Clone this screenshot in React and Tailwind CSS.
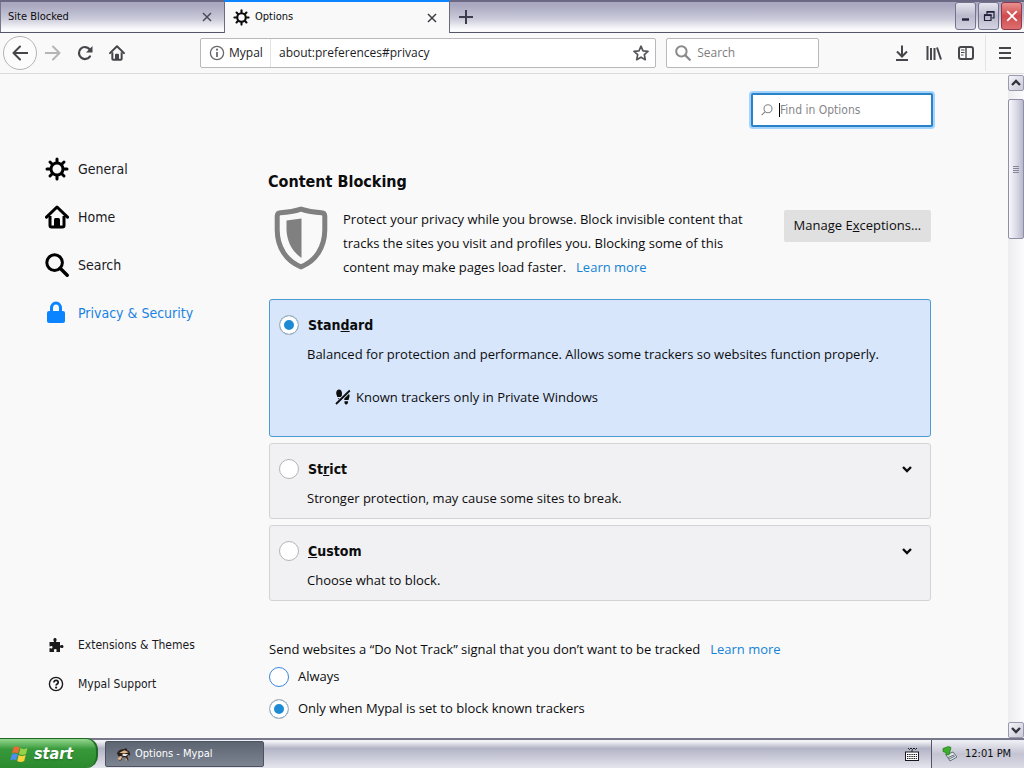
import { useState } from 'react';

const Gear = ({ className }) => (
  <svg viewBox="0 0 24 24" className={className} fill="none" stroke="currentColor">
    <circle cx="12" cy="12" r="6" strokeWidth="3" />
    <path
      d="M12 2v3M12 19v3M2 12h3M19 12h3M5 5l2 2M17 17l2 2M5 19l2-2M17 7l2-2"
      strokeWidth="3"
      strokeLinecap="round"
    />
  </svg>
);

const House = ({ className }) => (
  <svg viewBox="0 0 24 24" className={className} fill="none" stroke="currentColor">
    <path d="M1.500 12.200L12 2l10.500 10.200" strokeWidth="3" strokeLinecap="round" strokeLinejoin="round" />
    <path d="M5 11v9.500q0 1.500 1.500 1.500h11q1.500 0 1.500-1.500V11" strokeWidth="3" />
    <path d="M9 22v-7.500q0-1.500 1.500-1.500h3q1.500 0 1.500 1.500V22z" fill="currentColor" stroke="none" />
  </svg>
);

const Lens = ({ className }) => (
  <svg viewBox="0 0 24 24" className={className} fill="none" stroke="currentColor" strokeWidth="3">
    <circle cx="9.600" cy="9.600" r="7.800" />
    <path d="M15.200 15.200l7 7" strokeWidth="3.400" strokeLinecap="round" />
  </svg>
);

const Lock = ({ className }) => (
  <svg viewBox="0 0 24 24" className={className} fill="none">
    <rect x="2" y="10" width="18" height="12" rx="2" fill="currentColor" />
    <path d="M6.500 12V7a4.500 5 0 0 1 9 0V12" stroke="currentColor" strokeWidth="3" />
  </svg>
);

const Puzzle = ({ className }) => (
  <svg viewBox="0 0 16 16" className={className} fill="currentColor">
    <path d="M1.500 5h4c.5 0 .6-.5.2-1C5 3 5.300 1 7 1s2 2 1.300 3c-.4.500-.3 1 .2 1H12v3c0 .6.500.7 1 .3 1-.8 2.500-.3 2.500 1.200S14 11.500 13 10.800c-.5-.4-1-.3-1 .3V15H8.800c-.6 0-.7-.4-.4-.9.7-1 .3-2.100-1.100-2.100s-1.900 1.100-1.200 2.100c.3.500.2.900-.4.900H1.500v-3.500c0-.6.500-.7 1-.3.900.6 2 .2 2-1s-1.100-1.700-2-1c-.5.400-1 .3-1-.3z" />
  </svg>
);

const Help = ({ className }) => (
  <svg viewBox="0 0 16 16" className={className} fill="none" stroke="currentColor">
    <circle cx="8" cy="8" r="6.600" strokeWidth="1.400" />
    <path d="M5.900 6.400c0-2.900 4.300-2.700 4.300 0 0 1.600-2.100 1.500-2.100 3.100" strokeWidth="1.700" />
    <circle cx="8.100" cy="11.600" r="1.100" fill="currentColor" stroke="none" />
  </svg>
);

const Shield = () => (
  <svg viewBox="0 0 56 64" className="h-16 w-14 shrink-0 text-[#808080]">
    <path
      d="M28 3.200c7 2.400 14 3.300 20.500 3.500q3.200.2 3.300 3.400v14C51.600 41 43 55 28 60.800 13 55 4.400 41 4.200 24.100v-14q.1-3.200 3.300-3.400C14 6.500 21 5.600 28 3.200z"
      fill="none"
      stroke="currentColor"
      strokeWidth="5"
    />
    <path d="M28.500 12.500v39.500C18.500 45 14 35 13.500 24V14.500z" fill="currentColor" />
  </svg>
);

const TrackerOff = () => (
  <svg viewBox="0 0 16 16" className="h-4 w-4 shrink-0" fill="currentColor">
    <path d="M4 .6c2 0 3.200 2 3 4.500L6.600 8H2.400C1.500 6 1 4.500 1.300 3 1.600 1.500 2.600.6 4 .6zM2.800 9.200h3.400L3.500 12z" />
    <path d="M12.300 4c1.700.2 2.500 1.800 2.200 3.600L13.500 11H9.300l-.2-3C9 5.500 10.500 3.800 12.300 4zM9.500 12.200h3.600c0 2-.6 3.300-2 3.200-1.300 0-1.800-1.200-1.600-3.200z" />
    <path d="M1 15L15 1.500" stroke="#d7e6fb" strokeWidth="3.600" />
    <path d="M1 15L14.800 1.500" stroke="currentColor" strokeWidth="1.800" />
  </svg>
);

const Chevron = ({ className, up }) => (
  <svg viewBox="0 0 10 8" className={className} fill="none" stroke="currentColor" strokeWidth="2.400">
    <path d={up ? 'M1 6l4-4 4 4' : 'M1 2l4 4 4-4'} />
  </svg>
);

const Cross = ({ className }) => (
  <svg viewBox="0 0 12 12" className={className} fill="none" stroke="currentColor" strokeWidth="1.800">
    <path d="M1.200 1.200l9.600 9.600M10.800 1.200L1.200 10.800" />
  </svg>
);

const windowButton =
  'flex h-7 w-[21px] items-center justify-center rounded-[3px] border border-[#73738f] bg-linear-to-b from-[#e6e6f0] via-[#b9b9cc] to-[#d4d4e2]';

const TabStrip = () => (
  <div className="flex h-[33px] border-b border-b-[#55556a] border-t-2 border-t-[#6b6884] bg-linear-to-b from-[#a9a8c0] from-10% via-[#c9c9d9] via-55% to-[#fafafc] to-90%">
    <div className="flex w-56 items-center justify-between border-l border-[#77758c] pr-3 pl-[7px] text-[11px]">
      <span>Site Blocked</span>
      <button aria-label="Close Site Blocked">
        <Cross className="h-[10px] w-[10px] text-[#4a4a55]" />
      </button>
    </div>
    <div className="-mt-0.5 -mb-px flex w-[226px] items-center border-x border-t-2 border-x-[#6b6a7c] border-t-[#0a84ff] bg-[#f9f9fa] pr-3 pl-2 text-[11px]">
      <Gear className="h-[17px] w-[17px]" />
      <span className="ml-[5px] flex-1">Options</span>
      <button aria-label="Close Options">
        <Cross className="h-[10px] w-[10px] text-[#3c3c44]" />
      </button>
    </div>
    <button aria-label="New tab" className="px-[9px]">
      <svg viewBox="0 0 14 14" className="h-[14px] w-[14px]" stroke="#3c3c4a" strokeWidth="2">
        <path d="M7 0v14M0 7h14" />
      </svg>
    </button>
    <div className="ml-auto flex gap-0.5 pr-0.5">
      <button aria-label="Minimize" className={windowButton}>
        <svg viewBox="0 0 12 12" className="h-3 w-3">
          <path d="M2 9.500h7" stroke="#1f1f3a" strokeWidth="2.400" />
        </svg>
      </button>
      <button aria-label="Restore" className={windowButton}>
        <svg viewBox="0 0 12 12" className="h-3 w-3" fill="none" stroke="#1f1f3a" strokeWidth="1.200">
          <path d="M4 4V1.500h7V8H8.500" />
          <path d="M1.500 5h6.500v5.500H1.500z" />
          <path d="M1 5.200h7.500M4 1.800h7" strokeWidth="1.800" />
        </svg>
      </button>
      <button
        aria-label="Close"
        className="flex h-7 w-[21px] items-center justify-center rounded-[3px] border border-[#8f3a4c] bg-linear-to-b from-[#e89090] via-[#cf4a4e] to-[#dd6f6f]"
      >
        <Cross className="h-3 w-3 text-white" />
      </button>
    </div>
  </div>
);

const Toolbar = () => (
  <div className="flex h-[41px] items-center border-b border-[#dcdcde] bg-[#f9f9fa] text-[#46464a]">
    <button
      aria-label="Back"
      className="ml-[3px] flex h-[34px] w-[34px] items-center justify-center rounded-full border border-[#b4b4b6] bg-[#fcfcfd]"
    >
      <svg viewBox="0 0 16 16" className="h-4 w-4" fill="none" stroke="currentColor" strokeWidth="2">
        <path d="M15.500 8H1.500M8 1.500L1.500 8 8 14.500" strokeLinejoin="round" strokeLinecap="round" />
      </svg>
    </button>
    <button aria-label="Forward" className="ml-2 text-[#b5b5b7]">
      <svg viewBox="0 0 16 16" className="h-4 w-4" fill="none" stroke="currentColor" strokeWidth="2">
        <path d="M.500 8h14M8 1.500L14.500 8 8 14.500" strokeLinejoin="round" strokeLinecap="round" />
      </svg>
    </button>
    <button aria-label="Reload" className="ml-4">
      <svg viewBox="0 0 16 16" className="h-4 w-4" fill="none" stroke="currentColor" strokeWidth="2.200">
        <path d="M13 11.300A6 6 0 1 1 12.600 4.200" strokeLinecap="round" />
        <path d="M15.500 1v6.500H9z" fill="currentColor" stroke="none" />
      </svg>
    </button>
    <button aria-label="Home page" className="ml-4">
      <House className="h-4 w-4" />
    </button>
    <label className="ml-[75px] flex h-[30px] min-w-0 flex-[13] items-center rounded-xs border border-[#b9b9bb] bg-white px-2 font-['Open_Sans',sans-serif] text-[12px] text-[#1c1c1f]">
      <svg viewBox="0 0 16 16" className="h-4 w-4 shrink-0 text-[#6a6a6e]" fill="none" stroke="currentColor">
        <circle cx="8" cy="8" r="6.600" strokeWidth="1.300" />
        <path d="M8 7v5" strokeWidth="1.800" />
        <circle cx="8" cy="4.700" r="1.100" fill="currentColor" stroke="none" />
      </svg>
      <span className="ml-1 w-[42px] border-r border-[#e2e2e4] leading-7">Mypal</span>
      <input
        aria-label="Address"
        defaultValue="about:preferences#privacy"
        className="ml-2 min-w-0 flex-1 outline-none"
      />
      <svg
        viewBox="0 0 16 16"
        className="-mr-0.5 h-4 w-4 shrink-0 text-[#56565a]"
        fill="none"
        stroke="currentColor"
        strokeWidth="1.700"
        strokeLinejoin="round"
      >
        <path d="M8 1.200l2 4.600 5 .5-3.700 3.400 1 5L8 12.200 3.700 14.700l1-5L1 6.300l5-.5z" />
      </svg>
    </label>
    <label className="ml-[10px] flex h-[30px] min-w-0 flex-[4] items-center rounded-xs border border-[#b9b9bb] bg-white px-2 font-['Open_Sans',sans-serif] text-[12px]">
      <Lens className="h-4 w-4 shrink-0 text-[#8a8a8c]" />
      <input
        aria-label="Search the web"
        placeholder="Search"
        className="ml-1.5 min-w-0 flex-1 outline-none placeholder:text-[#7d7d80]"
      />
    </label>
    <div className="ml-[75px] flex items-center gap-4">
      <button aria-label="Downloads">
        <svg viewBox="0 0 16 16" className="h-4 w-4" fill="none" stroke="currentColor" strokeWidth="2">
          <path d="M8 .500v10.500M3 6.500l5 5 5-5M2 15h12" />
        </svg>
      </button>
      <button aria-label="Library">
        <svg viewBox="0 0 16 16" className="h-4 w-4" fill="none" stroke="currentColor" strokeWidth="2">
          <path d="M1.500 1v14M5 3v12M8.500 3v12M11 2.500l4 12" />
        </svg>
      </button>
      <button aria-label="Sidebar">
        <svg viewBox="0 0 16 16" className="h-4 w-4" fill="none" stroke="currentColor">
          <rect x="1" y="2" width="14" height="12" rx="2" strokeWidth="2" />
          <path d="M8 2v12" strokeWidth="1.400" />
          <path d="M3 5h3.500M3 7.500h3.500M3 10h2.500" />
        </svg>
      </button>
    </div>
    <button aria-label="Open menu" className="ml-[11px] flex h-9 items-center border-l border-[#e4e4e6] pr-3 pl-3">
      <svg viewBox="0 0 14 14" className="h-[14px] w-[14px]" stroke="currentColor" strokeWidth="2">
        <path d="M1 2h12M1 7h12M1 12h12" />
      </svg>
    </button>
  </div>
);

const categories = [
  { name: 'General', icon: Gear },
  { name: 'Home', icon: House },
  { name: 'Search', icon: Lens },
  { name: 'Privacy & Security', icon: Lock, active: true },
];

const Sidebar = () => (
  <nav className="flex w-[268px] shrink-0 flex-col pt-[71px] pb-[35px] pl-[45px] text-[#1a1a1d]">
    {categories.map(({ name, icon: Icon, active }) => (
      <a
        key={name}
        href="#privacy"
        className={`flex h-12 items-center gap-[9px] text-[14px] ${active ? 'text-[#1a82e2]' : ''}`}
      >
        <Icon className={`h-6 w-6 ${active ? 'text-[#0a84ff]' : 'text-black'}`} />
        {name}
      </a>
    ))}
    <div className="mt-auto text-[12px]">
      <a href="#addons" className="flex h-[39px] items-center gap-[14px] pl-[3px]">
        <Puzzle className="h-4 w-4" />
        Extensions &amp; Themes
      </a>
      <a href="#support" className="flex h-[39px] items-center gap-[14px] pl-[3px]">
        <Help className="h-4 w-4" />
        Mypal Support
      </a>
    </div>
  </nav>
);

const radio =
  'h-5 w-5 shrink-0 appearance-none rounded-full border border-[#b3b3b6] bg-white checked:bg-[#1d8bd3] checked:shadow-[inset_0_0_0_4px_white]';

const Level = ({ value, level, onChange, title, text, children }) => {
  const active = value === level;
  return (
    <div
      className={`rounded-[3px] border px-[9px] pt-[13px] leading-6 ${
        active ? 'border-[#4a9bd4] bg-[#d7e6fb] pb-[27px]' : 'border-[#d3d3d6] bg-[#f1f1f3] pb-2'
      }`}
    >
      <div className="flex items-center">
        <label className="flex flex-1 items-center gap-[9px] font-['DejaVu_Sans_Condensed',sans-serif] text-[14px] font-bold">
          <input type="radio" name="level" checked={active} onChange={() => onChange(value)} className={radio} />
          <span>{title}</span>
        </label>
        {!active && (
          <button aria-label="Expand" className="mr-[9px]">
            <Chevron className="h-2 w-[10px]" />
          </button>
        )}
      </div>
      <p className="mt-[5px] pl-7">{text}</p>
      {active && children}
    </div>
  );
};

const Preferences = () => {
  const [level, setLevel] = useState('standard');
  const [signal, setSignal] = useState('known');

  return (
    <section className="min-w-0 max-w-[665px] flex-1 pt-[19px] font-['Open_Sans',sans-serif] text-[13px] text-[#0c0c0d]">
      <label className="ml-auto flex h-[34px] w-[182px] items-center rounded-xs border-2 border-[#2a82c9] bg-white px-2 font-['DejaVu_Sans_Condensed',sans-serif] text-[12px] ring-2 ring-[#a4d3fb]">
        <svg viewBox="0 0 12 12" className="h-3 w-3" fill="none" stroke="#858588" strokeWidth="1.100">
          <circle cx="7" cy="4.800" r="4" />
          <path d="M4 7.800L.600 11.200" />
        </svg>
        <span className="ml-1.5 h-[14px] w-px shrink-0 bg-black" />
        <input
          aria-label="Find in Options"
          placeholder="Find in Options"
          className="min-w-0 flex-1 outline-none placeholder:text-[#87878a]"
        />
      </label>

      <div className="pr-0.5">
        <h2 className="mt-[43px] font-['DejaVu_Sans_Condensed',sans-serif] text-[16px] leading-6 font-bold">
          Content Blocking
        </h2>
        <div className="mt-3 flex items-start">
          <div className="ml-[5px]">
            <Shield />
          </div>
          <p className="ml-[14px] max-w-[412px] flex-1 pt-px leading-6">
            Protect your privacy while you browse. Block invisible content that tracks the sites you visit and
            profiles you. Blocking some of this content may make pages load faster.
            <a href="#learn" className="ml-[10px] text-[#1583d3]">
              Learn more
            </a>
          </p>
          <button className="mt-1 ml-auto h-8 rounded-xs bg-[#e0e0e1] px-[10px] whitespace-nowrap">
            Manage E<u>x</u>ceptions…
          </button>
        </div>

        <div className="mt-5 ml-px flex flex-col gap-1.5">
          <Level
            value="standard"
            level={level}
            onChange={setLevel}
            title={<>Stan<u>d</u>ard</>}
            text="Balanced for protection and performance. Allows some trackers so websites function properly."
          >
            <p className="mt-[19px] flex items-center gap-[5px] pl-14">
              <TrackerOff />
              Known trackers only in Private Windows
            </p>
          </Level>
          <Level
            value="strict"
            level={level}
            onChange={setLevel}
            title={<>St<u>r</u>ict</>}
            text="Stronger protection, may cause some sites to break."
          />
          <Level
            value="custom"
            level={level}
            onChange={setLevel}
            title={<><u>C</u>ustom</>}
            text="Choose what to block."
          />
        </div>

        <div className="mt-9 ml-px">
          <p className="leading-6">
            Send websites a “Do Not Track” signal that you don’t want to be tracked
            <a href="#dnt" className="ml-[10px] text-[#1583d3]">
              Learn more
            </a>
          </p>
          <label className="flex h-8 items-center gap-[9px]">
            <input
              type="radio"
              name="dnt"
              checked={signal === 'always'}
              onChange={() => setSignal('always')}
              className="h-5 w-5 shrink-0 appearance-none rounded-full border border-[#3a86dd] bg-white checked:bg-[#1d8bd3] checked:shadow-[inset_0_0_0_4px_white]"
            />
            Always
          </label>
          <label className="flex h-8 items-center gap-[9px]">
            <input
              type="radio"
              name="dnt"
              checked={signal === 'known'}
              onChange={() => setSignal('known')}
              className={radio}
            />
            Only when Mypal is set to block known trackers
          </label>
        </div>
      </div>
    </section>
  );
};

const scrollButton =
  'flex h-4 w-full shrink-0 items-center justify-center rounded-xs border border-[#9a9aae] bg-linear-to-br from-[#f4f4f8] to-[#c9c9d8] text-[#33333f]';

const Scrollbar = () => (
  <div className="ml-auto flex w-4 shrink-0 flex-col bg-linear-to-r from-[#ededf0] to-[#fbfbfd] pt-px">
    <button aria-label="Scroll up" className={scrollButton}>
      <Chevron up className="h-2 w-[10px]" />
    </button>
    <div className="flex-1 pt-2">
      <div className="flex h-[140px] flex-col items-center justify-center gap-px rounded-xs border border-[#8f8fa6] bg-linear-to-r from-[#f6f6fa] via-[#dcdce8] to-[#b9b9cd]">
        <span className="h-px w-1.5 bg-[#85859c]" />
        <span className="h-px w-1.5 bg-[#85859c]" />
        <span className="h-px w-1.5 bg-[#85859c]" />
        <span className="h-px w-1.5 bg-[#85859c]" />
      </div>
    </div>
    <button aria-label="Scroll down" className={scrollButton}>
      <Chevron className="h-2 w-[10px]" />
    </button>
  </div>
);

const Taskbar = () => (
  <footer className="flex h-[30px] shrink-0 items-stretch border-t-2 border-[#77788c] bg-linear-to-b from-[#f3f3f7] from-5% via-[#b2b3c5] via-30% to-[#e6e6ee] text-[11px]">
    <button className="-mt-0.5 flex w-[98px] items-center gap-1 rounded-r-xl border-t border-r-2 border-[#1f6b25] bg-linear-to-b from-[#8fd48a] from-2% via-[#36993a] via-35% to-[#2c8a2e] pl-[10px] text-[16px] leading-none font-bold text-white italic text-shadow-sm">
      <svg viewBox="0 0 20 20" className="h-5 w-5">
        <path d="M3.500 3.500c2-1.300 4-1.300 6 0L8 9.500c-2-1.200-4-1.200-6 0z" fill="#ee6a32" />
        <path d="M10.500 4c2 1.300 4.500 1.300 7 0L16 10c-2.500 1.200-5 1.200-7 0z" fill="#97d14a" />
        <path d="M1.800 10.500c2-1.200 4-1.200 6 0l-1.600 6c-2-1.200-4-1.200-6 0z" fill="#4e8ef0" />
        <path d="M8.700 11c2 1.200 4.500 1.200 7 0l-1.500 6c-2.500 1.200-5 1.200-7 0z" fill="#fbd13c" />
      </svg>
      start
    </button>
    <button className="my-px ml-[7px] flex w-[159px] items-center gap-1 rounded-xs border border-[#4c5260] bg-linear-to-b from-[#5d6472] to-[#7c8492] pl-[10px] text-white">
      <svg viewBox="0 0 16 16" className="h-[15px] w-[15px]">
        <path
          d="M1 7c1-3 4-5 7-4.500L11 1l1 2.500c2.500 1 3.500 3 3 5.500l-2-.5-1 2 1.500 4h-2l-2-3.500L7 11l-1.500 3.500H3.200L5 10 2.500 9.500z"
          fill="#2b201a"
        />
        <path d="M3.500 6L9 3.500l4.500 2L9 7zM1.500 12.500l3.500-3 2 .8-2.500 3.700zM10 10.500l2.500 4h-2z" fill="#dcb98a" />
        <path d="M7 7.500l6 .3-2.500 1.700-3.500-.3z" fill="#fff" />
      </svg>
      Options - Mypal
    </button>
    <div className="ml-auto flex items-center pr-3">
      <svg viewBox="0 0 14 14" className="h-[14px] w-[14px]" fill="none" stroke="#18181c">
        <path d="M3 1l1.500 1.500L6 1l1.500 1.500L9 1l1.500 1.500L12 1M7 3v2" />
        <rect x=".5" y="5" width="13" height="8.500" fill="#fff" />
        <path d="M2 7.500h10M2 9.500h10M2 11.500h10" strokeDasharray="1.400 .8" strokeWidth="1.200" />
      </svg>
    </div>
    <div className="flex w-[93px] items-center gap-2 border-l border-[#55566a] bg-linear-to-b from-[#ececf3] from-5% via-[#c3c3d2] to-[#dcdce6] pl-[10px]">
      <svg viewBox="0 0 15 16" className="h-4 w-[15px]">
        <path d="M4 9l7-3 4 5-7 4z" fill="#e3e8e6" stroke="#60707a" />
        <path d="M6 11.500l6-2.500M7 13l6-3" stroke="#60707a" />
        <path d="M1 2.500L6.500.5 9 1.500l-1 4-1 3.500-3.500-.5L4.500 7 1 5.500z" fill="#3cae2c" stroke="#1f7a1a" strokeWidth=".7" />
      </svg>
      <span>12:01 PM</span>
    </div>
  </footer>
);

export default function App() {
  return (
    <div className="flex h-screen flex-col overflow-hidden bg-[#f9f9fa] font-['DejaVu_Sans_Condensed','Noto_Sans',sans-serif] text-[#0c0c0d]">
      <TabStrip />
      <Toolbar />
      <main className="flex min-h-0 flex-1">
        <Sidebar />
        <Preferences />
        <Scrollbar />
      </main>
      <Taskbar />
    </div>
  );
}
